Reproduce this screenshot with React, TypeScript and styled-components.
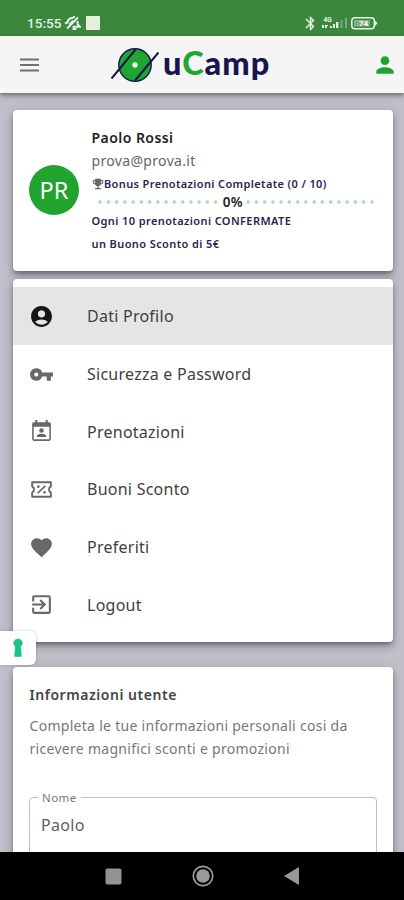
import React from "react";
import styled, { createGlobalStyle } from "styled-components";
import {
  MdAccountCircle,
  MdBluetooth,
  MdEmojiEvents,
  MdExitToApp,
  MdFavorite,
  MdPerson,
  MdVpnKey,
} from "react-icons/md";

const GlobalStyle = createGlobalStyle`
  * { box-sizing: border-box; }
  body { margin: 0; font-family: "Noto Sans", "Open Sans", sans-serif; }
`;

const Screen = styled.div`
  position: relative;
  width: 404px;
  height: 900px;
  overflow: hidden;
  display: flex;
  flex-direction: column;
  background: #c0c0ca;
`;

const StatusBar = styled.div`
  height: 36px;
  flex: none;
  display: flex;
  align-items: center;
  padding: 10px 26px 0 27px;
  background: #3b873e;
  color: #e6f2e4;
`;

const Clock = styled.span`
  width: 37px;
  font: 500 13.6px/16px Roboto, sans-serif;
  white-space: nowrap;
`;

const NoticeIcons = styled.div`
  display: flex;
  align-items: center;
  gap: 5px;
`;

const StatusIcons = styled.div`
  display: flex;
  align-items: center;
  gap: 3px;
  margin-left: auto;
`;

const Toolbar = styled.header`
  position: relative;
  z-index: 2;
  height: 57px;
  flex: none;
  display: flex;
  align-items: center;
  padding: 0 6px 0 20px;
  background: #f5f5f5;
  box-shadow: 0 2px 4px rgba(0, 0, 0, 0.35), 0 4px 6px rgba(0, 0, 0, 0.12);
`;

const Logo = styled.div`
  display: flex;
  align-items: center;
  gap: 4px;
  margin: 0 auto 0 72px;
`;

const Wordmark = styled.span`
  width: 112px;
  padding-bottom: 3px;
  font: 900 32.5px/36px Lato, sans-serif;
  letter-spacing: 1px;
  color: #17154f;
  white-space: nowrap;
`;

const GreenLetter = styled.span`
  color: #1da92f;
`;

const Content = styled.main`
  flex: 1;
  min-height: 0;
  overflow: hidden;
  padding: 17px 11px 0 13px;
`;

const Card = styled.section<{ $height: number; $gap?: number }>`
  height: ${(p) => p.$height}px;
  margin-bottom: ${(p) => p.$gap ?? 0}px;
  border-radius: 4px;
  background: #fff;
  box-shadow: 0 3px 4px -1px rgba(0, 0, 0, 0.34), 0 5px 9px rgba(0, 0, 0, 0.18),
    0 1px 13px rgba(0, 0, 0, 0.12);
`;

const ProfileCard = styled(Card)`
  display: flex;
  align-items: center;
  padding: 0 16px;
`;

const Avatar = styled.div`
  width: 50px;
  height: 50px;
  margin-right: 12.5px;
  flex: none;
  display: flex;
  align-items: center;
  justify-content: center;
  border-radius: 50%;
  background: #20a32f;
  color: #fff;
  font-size: 23.5px;
`;

const ProfileText = styled.div`
  flex: 1;
  display: flex;
  flex-direction: column;
  align-self: flex-start;
  padding-top: 16px;
  white-space: nowrap;
`;

const Name = styled.div`
  font-size: 14px;
  font-weight: 600;
  line-height: 23px;
  letter-spacing: 0.45px;
  color: #222;
`;

const Email = styled.div`
  font-size: 14px;
  line-height: 23px;
  letter-spacing: 0.33px;
  color: #666;
`;

const Bonus = styled.div`
  display: flex;
  align-items: center;
  height: 23px;
  font-size: 11px;
  font-weight: 600;
  letter-spacing: 0.37px;
  color: #28264f;
  & svg { margin: 0 -0.5px 0 -1px; color: #666; }
`;

const Progress = styled.div`
  display: flex;
  align-items: center;
  height: 14px;
  padding-left: 4.5px;
`;

const Dots = styled.div<{ $count: number }>`
  flex: none;
  width: ${(p) => p.$count * 8.25}px;
  height: 4px;
  background: radial-gradient(circle at center, #a6dfb5 1.4px, transparent 2.1px) 0 0 / 8.25px 4px;
`;

const Percent = styled.span`
  flex: none;
  width: 24.5px;
  padding-left: 3px;
  font-size: 13.5px;
  font-weight: 600;
  line-height: 13px;
  letter-spacing: 0.3px;
  color: #222;
`;

const BonusNote = styled.p`
  margin: 0;
  font-size: 11px;
  font-weight: 600;
  line-height: 23px;
  letter-spacing: 0.4px;
  color: #28264f;
`;

const MenuCard = styled(Card)`
  padding-top: 8px;
`;

const MenuRow = styled.div<{ $active?: boolean }>`
  height: 57.7px;
  display: flex;
  align-items: center;
  gap: 33px;
  padding: 1px 0 0 16px;
  background: ${(p) => (p.$active ? "#e5e5e5" : "transparent")};
  color: #404040;
  font-size: 16px;
  letter-spacing: 0.25px;
  & svg { color: ${(p) => (p.$active ? "#161616" : "#686868")}; }
`;

const InfoCard = styled(Card)`
  padding: 16px 16.5px;
`;

const InfoTitle = styled.h2`
  margin: 0;
  font-size: 14px;
  font-weight: 600;
  line-height: 23px;
  letter-spacing: 0.54px;
  color: #444;
`;

const InfoText = styled.p`
  margin: 9px 0 0;
  font-size: 14px;
  line-height: 22.5px;
  letter-spacing: 0.29px;
  color: #777;
  white-space: nowrap;
`;

const Field = styled.fieldset`
  height: 66px;
  margin: 30px 0 0 -0.5px;
  padding: 0 11px;
  border: 1px solid #c0c0c0;
  border-radius: 4px;
  color: #606060;
  font-size: 16px;
  line-height: 22px;
  letter-spacing: 0.3px;
`;

const FieldLabel = styled.legend`
  margin-left: -3px;
  padding: 0 4px;
  color: #777;
  font-size: 11.5px;
  line-height: 15px;
  letter-spacing: 0.4px;
`;

const FieldValue = styled.div`
  padding-top: 9px;
`;

const ConsentTab = styled.div`
  position: absolute;
  z-index: 3;
  left: 0;
  top: 631px;
  width: 36px;
  height: 34px;
  display: flex;
  align-items: center;
  justify-content: center;
  border-radius: 0 6px 6px 0;
  background: #fff;
  box-shadow: 0 0 3px rgba(0, 0, 0, 0.25);
`;

const NavBar = styled.nav`
  position: relative;
  z-index: 2;
  height: 48px;
  flex: none;
  display: flex;
  align-items: center;
  justify-content: space-between;
  padding: 0 104px 0 105px;
  background: #000;
`;

const MenuIcon = () => (
  <svg width="19" height="14" viewBox="0 0 19 14">
    <path d="M0 1.5h19M0 7h19M0 12.5h19" stroke="#707070" strokeWidth="1.8" />
  </svg>
);

const LogoMark = () => (
  <svg width="48" height="36" viewBox="0 0 48 36">
    <circle cx="24" cy="18" r="16.2" fill="#20a532" stroke="#17154f" strokeWidth="1.4" />
    <path d="M0.5 31.5 24.5 2.5M24 33.5 47.5 5.5" stroke="#17154f" strokeWidth="2" />
    <circle cx="24" cy="18" r="2.7" fill="#eff8ef" />
  </svg>
);

const MuteIcon = () => (
  <svg width="17" height="16" viewBox="0 0 17 16" fill="none" stroke="currentColor">
    <path d="M3.5 7.5C4 4 6.5 2.5 9.5 3M13.5 6l.3 3.5 2 2.2H8.5M1 8.5l3-1.5M10 1v2" strokeWidth="2" />
    <path d="M3 13.5 14 2.5M8.5 14h4" strokeWidth="1.8" />
    <path d="M5 9.5l4-4" strokeWidth="1.5" />
  </svg>
);

const ScreenIcon = () => (
  <svg width="14" height="14" viewBox="0 0 14 14">
    <rect width="14" height="14" rx="1" fill="#e8f1e0" />
    <path d="M5 6.5h1M8 6.5h1M5.5 9h3" stroke="#d3e2ca" strokeWidth="1" />
  </svg>
);

const SignalIcon = () => (
  <svg width="26" height="14" viewBox="0 0 26 14" fill="currentColor">
    <text x="1.5" y="5.5" fontFamily="Roboto, sans-serif" fontSize="6.5" fontWeight="700">4G</text>
    <path d="M0 9h2v3H0zM3 9h3v1H5v2H3zM8 10h2v2H8zM11 8h2v4h-2zM14 6h2.4v6H14z" />
    <path d="M18.5 4h2v8h-2zM23 2h2v10h-2z" opacity=".35" />
  </svg>
);

const BatteryIcon = () => (
  <svg width="27" height="13" viewBox="0 0 27 13">
    <rect x=".8" y=".8" width="22.5" height="11" rx="3" fill="none" stroke="currentColor" strokeWidth="1.5" />
    <path d="M24 3.5 26.5 6.3 24 9z" fill="currentColor" />
    <rect x="3" y="3" width="16" height="6.6" fill="#d1e5cf" opacity=".45" />
    <text x="8" y="9" fill="#fff" fontFamily="Roboto, sans-serif" fontSize="8" fontWeight="700">74</text>
  </svg>
);

const CalendarAccountIcon = () => (
  <svg width="25" height="25" viewBox="0 0 24 24" fill="currentColor">
    <path d="M19.3 3H18V1h-2v2H8V1H6v2H4.7A1.7 1.7 0 0 0 3 4.7v14.6A1.7 1.7 0 0 0 4.7 21h14.6a1.7 1.7 0 0 0 1.7-1.7V4.7A1.7 1.7 0 0 0 19.3 3m.2 16.5h-15V7.5h15z" />
    <path d="M12 8.9a2.2 2.2 0 1 1 0 4.4 2.2 2.2 0 0 1 0-4.4M7.5 17.2v-.8c0-1.4 3-2.2 4.5-2.2s4.5.8 4.5 2.2v.8z" />
  </svg>
);

const TicketPercentIcon = () => (
  <svg width="25" height="25" viewBox="0 0 24 24" fill="none" stroke="currentColor" strokeWidth="1.8">
    <path d="M3 9V5h18v4a3.4 3.4 0 0 0 0 6v4H3v-4a3.4 3.4 0 0 0 0-6z" strokeLinejoin="round" />
    <path d="M8.3 15.5l7.4-7" strokeWidth="1.6" />
    <circle cx="9" cy="9.3" r="1.3" fill="currentColor" stroke="none" />
    <circle cx="15" cy="14.7" r="1.3" fill="currentColor" stroke="none" />
  </svg>
);

const KeyholeIcon = () => (
  <svg width="10" height="20" viewBox="0 0 10 20" fill="#19c486">
    <path d="M5 .8A4.2 4.2 0 0 0 2.2 8.4L1.2 18.7h7.6L7.8 8.4A4.2 4.2 0 0 0 5 .8z" />
  </svg>
);

const menu = [
  { label: "Dati Profilo", icon: <MdAccountCircle size={25} /> },
  { label: "Sicurezza e Password", icon: <MdVpnKey size={25} /> },
  { label: "Prenotazioni", icon: <CalendarAccountIcon /> },
  { label: "Buoni Sconto", icon: <TicketPercentIcon /> },
  { label: "Preferiti", icon: <MdFavorite size={25} /> },
  { label: "Logout", icon: <MdExitToApp size={25} /> },
];

export default function App() {
  return (
    <>
      <GlobalStyle />
      <Screen>
        <StatusBar>
          <Clock>15:55</Clock>
          <NoticeIcons>
            <MuteIcon />
            <ScreenIcon />
          </NoticeIcons>
          <StatusIcons>
            <MdBluetooth size={17} />
            <SignalIcon />
            <BatteryIcon />
          </StatusIcons>
        </StatusBar>
        <Toolbar>
          <MenuIcon />
          <Logo>
            <LogoMark />
            <Wordmark>
              u<GreenLetter>C</GreenLetter>amp
            </Wordmark>
          </Logo>
          <MdPerson size={26} color="#1ca52c" />
        </Toolbar>
        <Content>
          <ProfileCard $height={160.5} $gap={8.5}>
            <Avatar>PR</Avatar>
            <ProfileText>
              <Name>Paolo Rossi</Name>
              <Email>prova@prova.it</Email>
              <Bonus>
                <MdEmojiEvents size={14} />
                Bonus Prenotazioni Completate (0 / 10)
              </Bonus>
              <Progress>
                <Dots $count={15} />
                <Percent>0%</Percent>
                <Dots $count={16} />
              </Progress>
              <BonusNote>Ogni 10 prenotazioni CONFERMATE</BonusNote>
              <BonusNote>un Buono Sconto di 5€</BonusNote>
            </ProfileText>
          </ProfileCard>
          <MenuCard $height={362.5} $gap={25.5}>
            {menu.map((item, index) => (
              <MenuRow key={item.label} $active={index === 0}>
                {item.icon}
                {item.label}
              </MenuRow>
            ))}
          </MenuCard>
          <InfoCard $height={230}>
            <InfoTitle>Informazioni utente</InfoTitle>
            <InfoText>
              Completa le tue informazioni personali cosi da
              <br />
              ricevere magnifici sconti e promozioni
            </InfoText>
            <Field>
              <FieldLabel>Nome</FieldLabel>
              <FieldValue>Paolo</FieldValue>
            </Field>
          </InfoCard>
        </Content>
        <ConsentTab>
          <KeyholeIcon />
        </ConsentTab>
        <NavBar>
          <svg width="17" height="17">
            <rect x=".5" y=".5" width="16" height="16" rx="2" fill="#929292" />
          </svg>
          <svg width="24" height="24" viewBox="0 0 24 24">
            <circle cx="12" cy="12" r="9.7" fill="none" stroke="#999" strokeWidth="1.7" />
            <circle cx="12" cy="12" r="6.8" fill="#999" />
          </svg>
          <svg width="17" height="20">
            <path d="M1 10 16 1v18z" fill="#999" />
          </svg>
        </NavBar>
      </Screen>
    </>
  );
}
